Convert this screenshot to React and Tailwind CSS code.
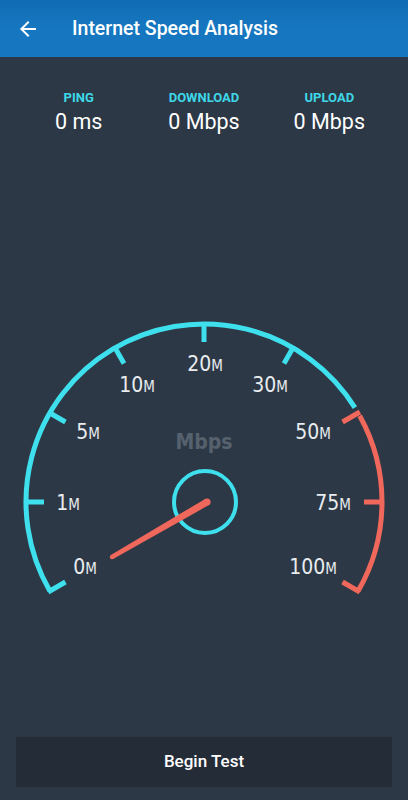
import React from 'react';

const CX = 204;
const CY = 193;
const R = 178;
const CYAN = '#3fe0ee';
const RED = '#f0685b';

const pt = (deg, r) => {
  const a = (deg * Math.PI) / 180;
  return [CX + r * Math.cos(a), CY - r * Math.sin(a)];
};

const arc = (from, to) => {
  const [x1, y1] = pt(from, R);
  const [x2, y2] = pt(to, R);
  return `M ${x1} ${y1} A ${R} ${R} 0 0 1 ${x2} ${y2}`;
};

const ticks = [210, 180, 150, 120, 90, 60, 30, 0, -30];

const labels = [
  { n: '0', x: 85, y: 257 },
  { n: '1', x: 68, y: 193 },
  { n: '5', x: 88, y: 122 },
  { n: '10', x: 137, y: 75 },
  { n: '20', x: 205, y: 54 },
  { n: '30', x: 270, y: 75 },
  { n: '50', x: 313, y: 122 },
  { n: '75', x: 333, y: 193 },
  { n: '100', x: 313, y: 257 },
];

const Stat = ({ label, value }) => (
  <div className="flex flex-col items-center">
    <div className="text-[13px] leading-4 font-bold text-[#3ed8e8]">{label}</div>
    <div className="mt-[4px] text-[21.5px] leading-6 text-white">{value}</div>
  </div>
);

const Gauge = () => {
  // needle: from center hub toward 0M
  const hx = 207, hy = 193, tx = 112, ty = 248;
  const dx = tx - hx, dy = ty - hy;
  const len = Math.hypot(dx, dy);
  const px = -dy / len, py = dx / len;
  const wb = 3.6, wt = 2.2;
  const needle = `M ${hx + px * wb} ${hy + py * wb} L ${tx + px * wt} ${ty + py * wt} L ${tx - px * wt} ${ty - py * wt} L ${hx - px * wb} ${hy - py * wb} Z`;

  return (
    <svg width="408" height="300" viewBox="0 0 408 300" className="block">
      <path d={arc(210, 32)} fill="none" stroke={CYAN} strokeWidth="5" />
      <path d={arc(29, -30)} fill="none" stroke={RED} strokeWidth="5" />
      {ticks.map((t) => {
        const [x1, y1] = pt(t, R + 2);
        const [x2, y2] = pt(t, R - 18);
        return (
          <line key={t} x1={x1} y1={y1} x2={x2} y2={y2} stroke={t <= 30 ? RED : CYAN} strokeWidth="5" />
        );
      })}
      <g style={{ fontFamily: '"DejaVu Sans Condensed", "DejaVu Sans", sans-serif' }} fill="#e8ecef" textAnchor="middle">
        {labels.map((l) => (
          <text key={l.n} x={l.x} y={l.y + 7.5} fontSize="21">
            {l.n}
            <tspan fontSize="15">M</tspan>
          </text>
        ))}
      </g>
      <text
        x="204"
        y="140"
        textAnchor="middle"
        fontSize="21"
        fontWeight="bold"
        fill="#56616e"
        style={{ fontFamily: '"DejaVu Sans Condensed", "DejaVu Sans", sans-serif' }}
      >
        Mbps
      </text>
      <circle cx="205" cy="193" r="31" fill="none" stroke={CYAN} strokeWidth="4" />
      <path d={needle} fill={RED} />
      <circle cx={hx} cy={hy} r={wb} fill={RED} />
      <circle cx={tx} cy={ty} r={wt} fill={RED} />
    </svg>
  );
};

export default function App() {
  return (
    <div className="h-[800px] w-[408px] flex flex-col bg-[#2d3846] overflow-hidden" style={{ fontFamily: 'Roboto, "Liberation Sans", sans-serif' }}>
      <header className="h-[57px] bg-gradient-to-b from-[#0f6cb3] via-[#1677c0] to-[#1677c0] flex items-center shrink-0">
        <div className="w-[72px] pl-4 flex items-center">
          <svg width="24" height="24" viewBox="0 0 24 24" fill="white">
            <path d="M20 11H7.83l5.59-5.59L12 4l-8 8 8 8 1.41-1.41L7.83 13H20v-2z" />
          </svg>
        </div>
        <h1 className="text-white text-[19.5px] font-medium">Internet Speed Analysis</h1>
      </header>

      <div className="grid grid-cols-3 px-4 pt-[33px]">
        <Stat label="PING" value="0 ms" />
        <Stat label="DOWNLOAD" value="0 Mbps" />
        <Stat label="UPLOAD" value="0 Mbps" />
      </div>

      <div className="mt-[175px]">
        <Gauge />
      </div>

      <button className="mt-auto mb-[13px] mx-4 h-[50px] bg-[#242c37] text-white text-[17px] font-medium flex items-center justify-center">
        Begin Test
      </button>
    </div>
  );
}
